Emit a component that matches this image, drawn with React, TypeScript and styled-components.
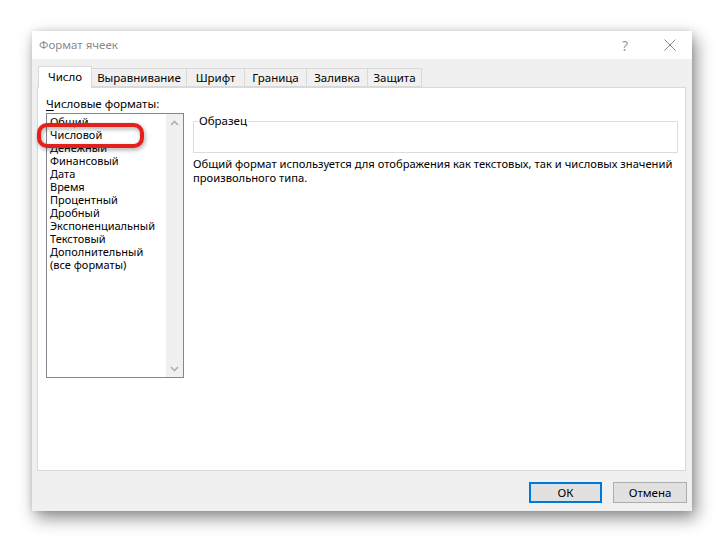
import React from "react";
import styled, { createGlobalStyle } from "styled-components";

const Global = createGlobalStyle`
  html, body { margin: 0; padding: 0; background: #ffffff; }
  body { font-family: "Noto Sans", "Open Sans", sans-serif; font-size: 11px; color: #000; }
  * { box-sizing: border-box; }
`;

const Page = styled.div`
  padding: 31px 32px;
  width: 724px;
  height: 543px;
`;

const Dialog = styled.div`
  width: 660px;
  height: 480px;
  background: #f0f0f0;
  display: flex;
  flex-direction: column;
  box-shadow: 4px 7px 16px rgba(0, 0, 0, 0.45), 0 0 6px rgba(0, 0, 0, 0.12);
`;

const TitleBar = styled.div`
  height: 28px;
  background: #ffffff;
  display: flex;
  align-items: center;
  padding-left: 7px;
`;

const Title = styled.div`
  flex: 1;
  color: #8a8a8a;
  font-size: 11.5px;
  line-height: 14px;
`;

const TitleButton = styled.div<{ $w: number }>`
  width: ${(p) => p.$w}px;
  height: 28px;
  display: flex;
  align-items: center;
  justify-content: center;
  color: #9a9a9a;
  font-size: 14px;
`;

const Body = styled.div`
  flex: 1;
  display: flex;
  flex-direction: column;
  padding: 7px 6px 8px 5px;
`;

const TabStrip = styled.div`
  height: 21px;
  display: flex;
  align-items: flex-end;
  padding-left: 1px;
  position: relative;
  z-index: 1;
`;

const Tab = styled.div<{ $w: number; $active?: boolean }>`
  width: ${(p) => p.$w}px;
  height: ${(p) => (p.$active ? 22 : 19)}px;
  margin-bottom: ${(p) => (p.$active ? -1 : 0)}px;
  margin-left: ${(p) => (p.$active ? 0 : -1)}px;
  background: ${(p) => (p.$active ? "#ffffff" : "#f0f0f0")};
  border: 1px solid #d9d9d9;
  border-bottom: ${(p) => (p.$active ? "none" : "1px solid #d9d9d9")};
  display: flex;
  align-items: center;
  justify-content: center;
  padding-bottom: ${(p) => (p.$active ? 1 : 0)}px;
  line-height: 14px;
  font-size: 11.5px;
  &:first-child { margin-left: 0; }
`;

const Panel = styled.div`
  height: 384px;
  background: #ffffff;
  border: 1px solid #d9d9d9;
  padding: 9px 8px 0 8px;
  position: relative;
`;

const Label = styled.div`
  line-height: 14px;
  height: 16px;
  font-size: 11.5px;
  u { text-decoration: underline; text-underline-offset: 2px; }
`;

const Columns = styled.div`
  display: flex;
  gap: 9px;
`;

const ListBox = styled.div`
  flex: 0 0 138px;
  width: 138px;
  height: 265px;
  border: 1px solid #82878f;
  background: #fff;
  display: flex;
`;

const Items = styled.div`
  flex: 1;
  padding: 1px 0 0 3px;
`;

const Item = styled.div`
  line-height: 13px;
  height: 13px;
  white-space: nowrap;
`;

const ScrollBar = styled.div`
  flex: 0 0 17px;
  background: #f0f0f0;
  display: flex;
  flex-direction: column;
  justify-content: space-between;
  align-items: center;
  padding: 6px 0 5px;
`;

const RightCol = styled.div`
  flex: 1;
  min-width: 0;
  padding-top: 1px;
`;

const Group = styled.fieldset`
  margin: 0;
  padding: 0;
  width: 485px;
  height: 39px;
  border: 1px solid #dcdcdc;
  legend {
    padding: 0 1px;
    margin-left: 4px;
    line-height: 14px;
    font-size: 11.5px;
  }
`;

const Description = styled.div`
  margin-top: 4px;
  line-height: 14px;
  font-size: 11.2px;
  white-space: nowrap;
`;

const Highlight = styled.div`
  position: absolute;
  left: -1px;
  top: 35px;
  width: 107px;
  height: 25px;
  border: 4px solid #e3211c;
  border-radius: 10px;
  filter: drop-shadow(1px 2px 2px rgba(0, 0, 0, 0.35));
  pointer-events: none;
`;

const Footer = styled.div`
  display: flex;
  justify-content: flex-end;
  gap: 11px;
  margin-top: 11px;
  margin-right: -1px;
`;

const Button = styled.div<{ $default?: boolean }>`
  width: ${(p) => (p.$default ? 73 : 74)}px;
  height: 21px;
  background: #e1e1e1;
  border: ${(p) => (p.$default ? "2px solid #0078d7" : "1px solid #adadad")};
  display: flex;
  align-items: center;
  justify-content: center;
  line-height: 14px;
  font-size: 11.5px;
`;

const Chevron = ({ up }: { up?: boolean }) => (
  <svg width="9" height="6" viewBox="0 0 9 6">
    <path
      d={up ? "M1 5 L4.5 1.5 L8 5" : "M1 1 L4.5 4.5 L8 1"}
      fill="none"
      stroke="#b0b0b0"
      strokeWidth="1.6"
    />
  </svg>
);

const tabs: [string, number][] = [
  ["Число", 54],
  ["Выравнивание", 96],
  ["Шрифт", 59],
  ["Граница", 63],
  ["Заливка", 62],
  ["Защита", 55],
];

const formats = [
  "Общий",
  "Числовой",
  "Денежный",
  "Финансовый",
  "Дата",
  "Время",
  "Процентный",
  "Дробный",
  "Экспоненциальный",
  "Текстовый",
  "Дополнительный",
  "(все форматы)",
];

export default function App() {
  return (
    <>
      <Global />
      <Page>
        <Dialog>
          <TitleBar>
            <Title>Формат ячеек</Title>
            <TitleButton $w={46}>?</TitleButton>
            <TitleButton $w={44}>
              <svg width="12" height="12" viewBox="0 0 12 12">
                <path d="M0.5 0.5 L11.5 11.5 M11.5 0.5 L0.5 11.5" stroke="#8a8a8a" strokeWidth="1" />
              </svg>
            </TitleButton>
          </TitleBar>
          <Body>
            <TabStrip>
              {tabs.map(([t, w], i) => (
                <Tab key={t} $w={w} $active={i === 0}>
                  {t}
                </Tab>
              ))}
            </TabStrip>
            <Panel>
              <Label>
                <u>Ч</u>исловые форматы:
              </Label>
              <Columns>
                <ListBox>
                  <Items>
                    {formats.map((f) => (
                      <Item key={f}>{f}</Item>
                    ))}
                  </Items>
                  <ScrollBar>
                    <Chevron up />
                    <Chevron />
                  </ScrollBar>
                </ListBox>
                <RightCol>
                  <Group>
                    <legend>Образец</legend>
                  </Group>
                  <Description>
                    Общий формат используется для отображения как текстовых, так и числовых значений
                    <br />
                    произвольного типа.
                  </Description>
                </RightCol>
              </Columns>
              <Highlight />
            </Panel>
            <Footer>
              <Button $default>ОК</Button>
              <Button>Отмена</Button>
            </Footer>
          </Body>
        </Dialog>
      </Page>
    </>
  );
}
